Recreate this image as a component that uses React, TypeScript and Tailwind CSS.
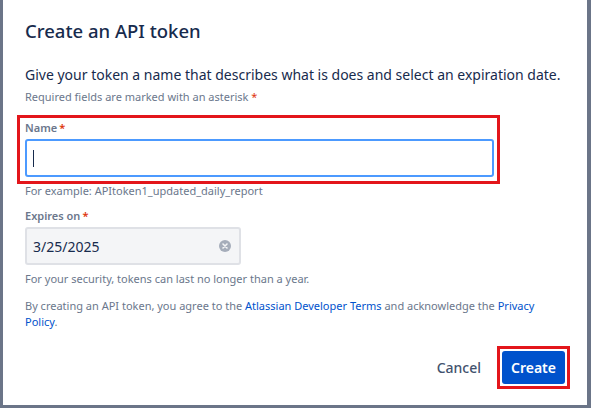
import { useState } from 'react';

const font = { fontFamily: '"Noto Sans", "Liberation Sans", sans-serif' };

export default function App() {
  const [name, setName] = useState('');

  return (
    <div className="w-[591px] h-[408px] bg-[#6b7588] flex pl-[3px] pr-[4px] pb-[3px]" style={font}>
      <div className="flex-1 bg-white flex flex-col px-[22px] pt-[17px]">
        <h1 className="text-[18.5px] leading-[28px] font-medium text-[#172b4d]">Create an API token</h1>

        <p className="mt-[20px] text-[14px] leading-[20px] text-[#172b4d]">
          Give your token a name that describes what is does and select an expiration date.
        </p>
        <p className="mt-[4px] text-[11px] leading-[16px] text-[#6b778c]">
          Required fields are marked with an asterisk <span className="text-[#de350b]">*</span>
        </p>

        {/* Name field, highlighted */}
        <div className="mt-[10px] -ml-[8px] w-[483px] border-[3px] border-[#e3161b] pl-[5px] pr-[3px] pt-[2px] pb-[4px]">
          <label className="block text-[11px] leading-[16px] font-semibold text-[#6b778c]">
            Name<span className="ml-[2px] text-[#de350b]">*</span>
          </label>
          <div className="mt-[3px] h-[38px] rounded-[3px] border-2 border-[#4c9aff] bg-white flex items-center px-[6px]">
            <span className="w-px h-[17px] bg-[#172b4d]" />
            <input
              value={name}
              onChange={e => setName(e.target.value)}
              className="flex-1 outline-none text-[14px] text-[#172b4d] bg-transparent"
            />
          </div>
        </div>
        <p className="text-[11px] leading-[14px] text-[#6b778c]">For example: APItoken1_updated_daily_report</p>

        <label className="mt-[10px] block text-[11px] leading-[16px] font-semibold text-[#6b778c]">
          Expires on<span className="ml-[2px] text-[#de350b]">*</span>
        </label>
        <div className="mt-[3px] w-[216px] h-[38px] rounded-[3px] border-2 border-[#dfe1e6] bg-[#f4f5f7] flex items-center justify-between pl-[6px] pr-[8px]">
          <span className="text-[14px] text-[#172b4d]">3/25/2025</span>
          <svg width="12" height="12" viewBox="0 0 12 12">
            <circle cx="6" cy="6" r="6" fill="#a5adba" />
            <path d="M4 4l4 4M8 4l-4 4" stroke="#f4f5f7" strokeWidth="1.6" strokeLinecap="round" />
          </svg>
        </div>
        <p className="mt-[7px] text-[11px] leading-[14px] text-[#6b778c]">For your security, tokens can last no longer than a year.</p>

        <p className="mt-[12px] text-[11px] leading-[16px] text-[#6b778c]">
          By creating an API token, you agree to the <a className="text-[#0052cc]">Atlassian Developer Terms</a> and acknowledge the{' '}
          <a className="text-[#0052cc]">Privacy</a> <a className="text-[#0052cc]">Policy</a>.
        </p>

        <div className="mt-auto mb-[16px] flex items-center justify-end gap-[14px] -mr-[5px]">
          <button className="text-[14px] font-medium text-[#42526e] px-[2px]">Cancel</button>
          <div className="border-[3px] border-[#e3161b] p-[2px]">
            <button className="h-[33px] px-[9px] rounded-[3px] bg-[#0052cc] text-white text-[14px] font-semibold">Create</button>
          </div>
        </div>
      </div>
    </div>
  );
}
